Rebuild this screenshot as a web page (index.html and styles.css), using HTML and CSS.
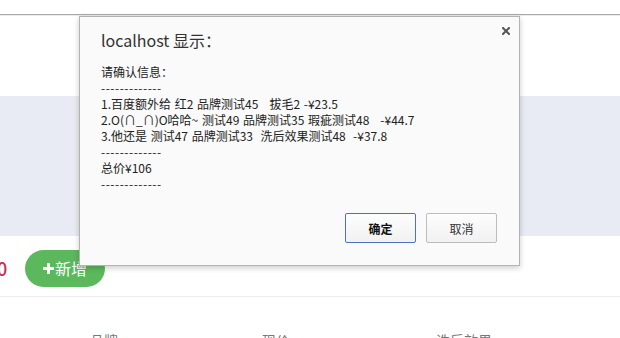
FILE: index.html
```html
<!DOCTYPE html>
<html lang="zh-CN">
<head>
    <meta charset="UTF-8">
    <meta name="viewport" content="width=device-width, initial-scale=1.0">
    <title>确认订单</title>
    <link rel="stylesheet" href="styles.css">
</head>
<body>
    <div class="browser-bar"></div>

    <div class="page">
        <div class="page-top"></div>
        <div class="page-band"></div>

        <div class="toolbar">
            <span class="total">0</span>
            <button class="add-btn">
                <svg class="plus" viewBox="0 0 11 11" width="11" height="11">
                    <path d="M4 0h3v4h4v3H7v4H4V7H0V4h4z" fill="#fff"/>
                </svg>新增
            </button>
        </div>

        <div class="table-head">
            <span>品牌</span>
            <span>现价</span>
            <span>洗后效果</span>
        </div>
    </div>

    <div class="dialog">
        <button class="dialog-close" aria-label="关闭">
            <svg viewBox="0 0 8 8" width="8" height="8">
                <path d="M1 1L7 7M7 1L1 7" stroke="#555" stroke-width="2" stroke-linecap="square"/>
            </svg>
        </button>
        <div class="dialog-title">localhost 显示：</div>
        <div class="dialog-body">
            <div class="msg-line">请确认信息：</div>
            <div class="msg-line rule">-------------</div>
            <div class="msg-line">1.百度额外给 红2 品牌测试45   拔毛2 -¥23.5</div>
            <div class="msg-line">2.O(∩_∩)O哈哈~ 测试49 品牌测试35 瑕疵测试48   -¥44.7</div>
            <div class="msg-line">3.他还是 测试47 品牌测试33  洗后效果测试48  -¥37.8</div>
            <div class="msg-line rule">-------------</div>
            <div class="msg-line">总价¥106</div>
            <div class="msg-line rule">-------------</div>
        </div>
        <div class="dialog-actions">
            <button class="dialog-btn ok">确定</button>
            <button class="dialog-btn">取消</button>
        </div>
    </div>
</body>
</html>
```

FILE: styles.css
```css
* {
    margin: 0;
    padding: 0;
    box-sizing: border-box;
}

body {
    background: #fff;
    font-family: "Noto Sans CJK SC", "Noto Sans", sans-serif;
    color: #333;
    overflow: hidden;
    height: 338px;
}

.browser-bar {
    height: 15px;
    border-bottom: 1px solid #a9a9a9;
    box-shadow: 0 1px 0 #ececec;
}

.page-top {
    height: 81px;
}

.page-band {
    height: 140px;
    background: #e8ebf3;
}

.toolbar {
    height: 61px;
    display: flex;
    align-items: center;
    border-bottom: 1px solid #eee;
    padding-top: 4px;
}

.total {
    color: #c9304a;
    font-size: 18px;
    font-weight: 500;
    margin-left: -3px;
    width: 28px;
}

.add-btn {
    display: flex;
    align-items: center;
    height: 37px;
    padding: 0 18px;
    border: none;
    border-radius: 19px;
    background: #5cb85c;
    color: #fff;
    font-family: inherit;
    font-size: 16px;
}

.plus {
    margin-right: 1px;
}

.table-head {
    display: grid;
    grid-template-columns: 172px 174px 1fr;
    padding: 33px 0 0 90px;
    color: #777;
    font-size: 14px;
    line-height: 20px;
}

.dialog {
    position: absolute;
    left: 79px;
    top: 16px;
    width: 441px;
    height: 250px;
    display: flex;
    flex-direction: column;
    padding: 13px 22px 22px 21px;
    background: #fafafa;
    border: 1px solid #b3b3b3;
    box-shadow: 0 2px 6px rgba(0, 0, 0, 0.2);
}

.dialog-close {
    position: absolute;
    top: 10px;
    right: 9px;
    width: 8px;
    height: 8px;
    border: none;
    background: none;
    display: flex;
}

.dialog-title {
    font-size: 16px;
    line-height: 20px;
    color: #333;
}

.dialog-body {
    margin-top: 14px;
    font-size: 12px;
    line-height: 16px;
    color: #222;
}

.msg-line {
    white-space: pre;
    word-spacing: 1px;
    height: 16px;
}

.msg-line.rule {
    letter-spacing: 0.5px;
}

.dialog-actions {
    margin-top: auto;
    display: flex;
    justify-content: flex-end;
    gap: 10px;
}

.dialog-btn {
    width: 71px;
    height: 30px;
    border: 1px solid #bdbdbd;
    border-radius: 2px;
    background: linear-gradient(#fdfdfd, #f1f1f1);
    font-family: inherit;
    font-size: 12px;
    color: #333;
}

.dialog-btn.ok {
    border-color: #4d72c4;
    color: #111;
    font-weight: bold;
}
```
